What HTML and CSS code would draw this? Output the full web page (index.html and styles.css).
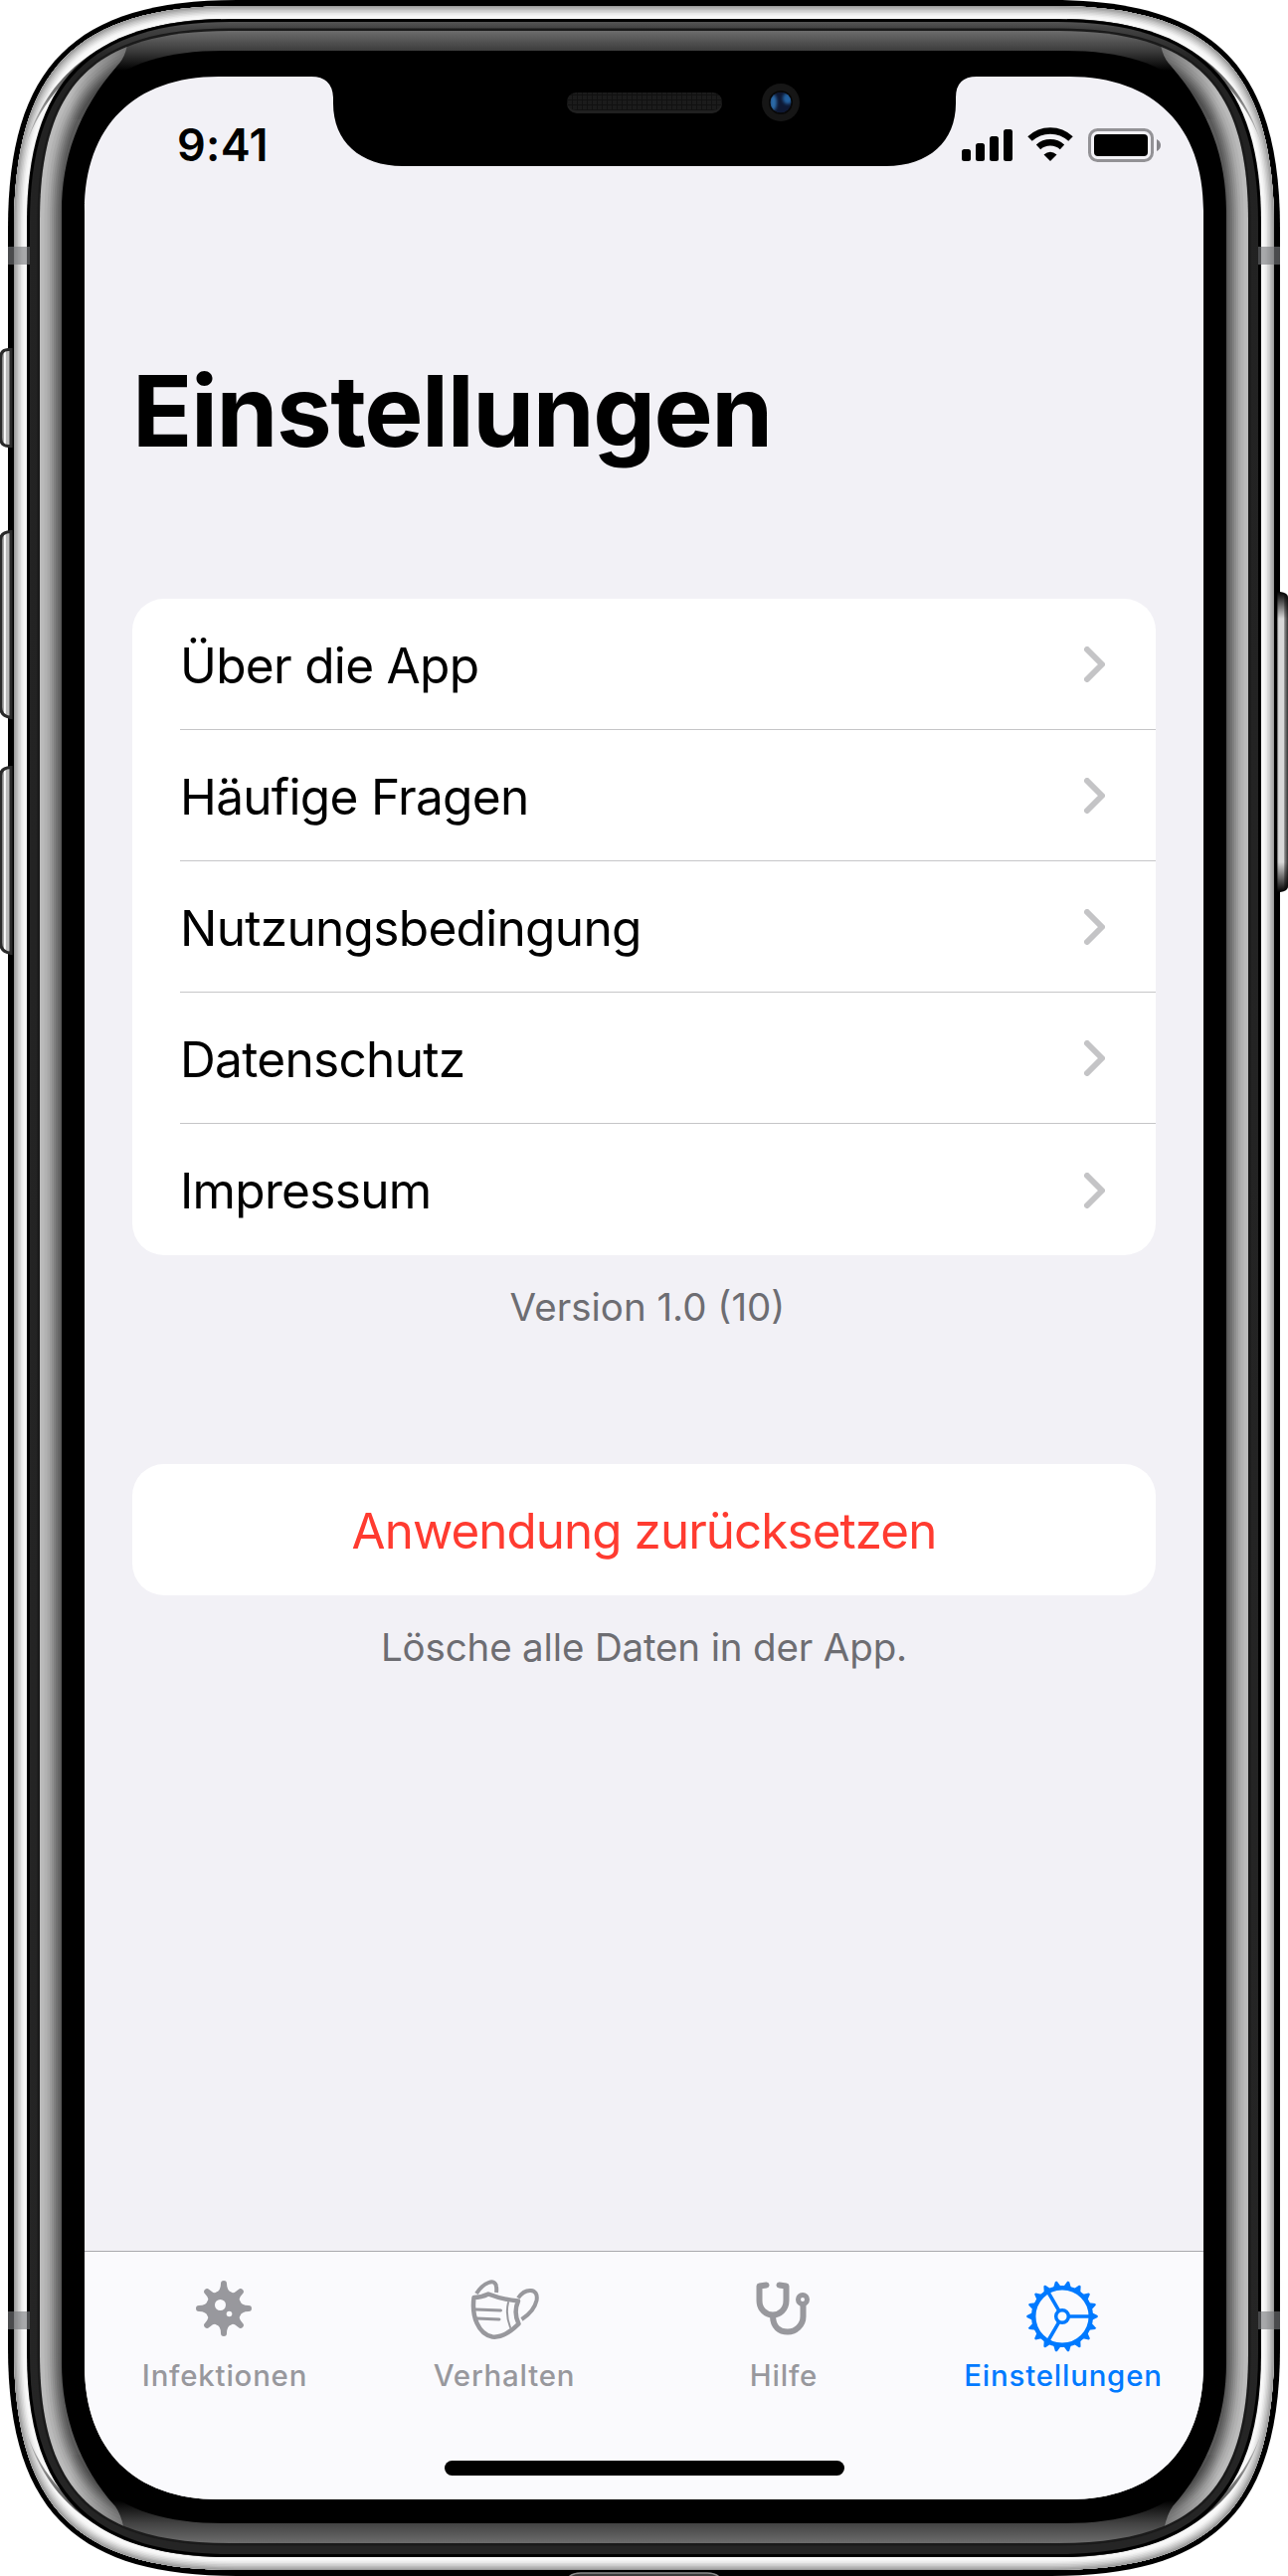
FILE: index.html
```html
<!DOCTYPE html>
<html lang="de">
<head>
<meta charset="utf-8">
<title>Einstellungen</title>
<link rel="stylesheet" href="styles.css">
</head>
<body>
<div class="device">
  <svg class="frame" viewBox="0 0 1295 2590" aria-hidden="true">
    <defs>
      <path id="silver" d="M14 230C14 70 76 6 236 6H1059C1219 6 1281 70 1281 230V2360C1281 2520 1219 2584 1059 2584H236C76 2584 14 2520 14 2360Z"/>
      <path id="glass" d="M40 222C40 85 94 31 231 31H1064C1201 31 1255 85 1255 222V2366C1255 2503 1201 2557 1064 2557H231C94 2557 40 2503 40 2366Z"/>
      <clipPath id="silverClip"><use href="#silver"/></clipPath>
      <clipPath id="sideClip">
        <path d="M38 20H128Q132 52 118 66C78 112 62 160 62 213V2375C62 2430 80 2480 116 2520Q126 2534 128 2570H38Z"/>
        <path d="M1257 20H1167Q1163 52 1177 66C1217 112 1233 160 1233 213V2375C1233 2430 1215 2480 1179 2520Q1169 2534 1167 2570H1257Z"/>
      </clipPath>
      <clipPath id="glassClip"><use href="#glass" clip-path="url(#sideClip)"/></clipPath>
      <clipPath id="lensClip"><circle cx="785" cy="103" r="10.500"/></clipPath>
      <filter id="soft" x="-50%" y="-50%" width="200%" height="200%"><feGaussianBlur stdDeviation="1.600"/></filter>
      <linearGradient id="rim" gradientUnits="userSpaceOnUse" x1="0" y1="22" x2="0" y2="2568">
        <stop offset="0" stop-color="#545454"/><stop offset=".0024" stop-color="#424242"/><stop offset=".015" stop-color="#222"/><stop offset="1" stop-color="#252525"/>
      </linearGradient>
      <linearGradient id="bezel" gradientUnits="userSpaceOnUse" x1="0" y1="31" x2="0" y2="2557">
        <stop offset="0" stop-color="#6c6c6c"/><stop offset=".008" stop-color="#3c3c3c"/><stop offset=".0158" stop-color="#000"/>
        <stop offset=".983" stop-color="#000"/><stop offset=".992" stop-color="#424242"/><stop offset="1" stop-color="#6c6c6c"/>
      </linearGradient>
      <linearGradient id="streak" gradientUnits="userSpaceOnUse" x1="170" y1="24" x2="28" y2="140">
        <stop offset="0" stop-color="#222"/><stop offset=".45" stop-color="#484848"/><stop offset=".75" stop-color="#777"/><stop offset="1" stop-color="#bbb"/>
      </linearGradient>
      <linearGradient id="fade" gradientUnits="userSpaceOnUse" x1="70" y1="0" x2="130" y2="0"><stop offset="0" stop-opacity="0"/><stop offset="1" stop-opacity=".4"/></linearGradient>
      <path id="shade" d="M222 19C160 20 116 36 84 60C60 78 40 103 27 143C38 114 52 95 68 79C100 42 150 20 222 20Z" fill="url(#streak)"/>
      <path id="dim" d="M60 31H131V75L90 120H60Z" fill="url(#fade)"/>
      <linearGradient id="keyL"><stop offset="0" stop-color="#444"/><stop offset=".3" stop-color="#aaa"/><stop offset=".32" stop-color="#fff"/><stop offset=".5" stop-color="#eee"/><stop offset=".55" stop-color="#bbb"/><stop offset=".85" stop-color="#bbb"/><stop offset="1" stop-color="#444"/></linearGradient>
      <linearGradient id="keyR"><stop offset="0" stop-color="#555"/><stop offset=".15" stop-color="#d8d8d8"/><stop offset=".6" stop-color="#d8d8d8"/><stop offset=".7" stop-color="#888"/><stop offset="1" stop-color="#333"/></linearGradient>
      <linearGradient id="keyEnds" x1="0" y1="0" x2="0" y2="1"><stop offset="0" stop-color="#000"/><stop offset=".09" stop-color="#000" stop-opacity="0"/><stop offset=".9" stop-color="#000" stop-opacity="0"/><stop offset="1" stop-color="#000"/></linearGradient>
      <pattern id="mesh" width="5" height="5" patternUnits="userSpaceOnUse"><path d="M0 0H5V5H0Z" fill="#1b1b1b"/><path d="M0 .5H5M.5 0V5" stroke="#111"/></pattern>
    </defs>
    <path d="M8 230C8 67 75 0 238 0H1057C1220 0 1287 67 1287 230V2360C1287 2523 1220 2590 1057 2590H238C75 2590 8 2523 8 2360Z"/>
    <g clip-path="url(#silverClip)" fill="none">
      <use href="#silver" fill="#f8f8f8"/>
      <use href="#silver" stroke="#f3f3f3" stroke-width="20"/>
      <use href="#silver" stroke="#e8e8e8" stroke-width="17"/>
      <use href="#silver" stroke="#dadada" stroke-width="14"/>
      <use href="#silver" stroke="#cbcbcb" stroke-width="11"/>
      <use href="#silver" stroke="#bcbcbc" stroke-width="8"/>
      <use href="#silver" stroke="#aaa" stroke-width="5"/>
      <use href="#silver" stroke="#999" stroke-width="2"/>
    </g>
    <use href="#shade"/>
    <use href="#shade" transform="matrix(-1 0 0 1 1295 0)"/>
    <use href="#shade" transform="matrix(1 0 0 -1 0 2590)"/>
    <use href="#shade" transform="matrix(-1 0 0 -1 1295 2590)"/>
    <path d="M27 224C27 84 87 19 232 19H1063C1208 19 1268 84 1268 224V2366C1268 2506 1208 2571 1063 2571H232C87 2571 27 2506 27 2366Z"/>
    <path fill="url(#rim)" d="M30 224C30 86 90 22 232 22H1063C1205 22 1265 86 1265 224V2366C1265 2504 1205 2568 1063 2568H232C90 2568 30 2504 30 2366Z"/>
    <use href="#glass" fill="url(#bezel)" stroke="#1a1a1a" stroke-width="5"/>
    <use href="#glass" fill="url(#bezel)"/>
    <path d="M62 213C62 102 109 51 225 51H1070C1186 51 1233 102 1233 213V2375C1233 2486 1186 2537 1070 2537H225C109 2537 62 2486 62 2375Z"/>
    <g clip-path="url(#glassClip)" fill="none">
      <use href="#glass" stroke="#5a5a5a" stroke-width="60"/>
      <use href="#glass" stroke="#666" stroke-width="40"/>
      <use href="#glass" stroke="#727272" stroke-width="36"/>
      <use href="#glass" stroke="#808080" stroke-width="32"/>
      <use href="#glass" stroke="#8e8e8e" stroke-width="28"/>
      <use href="#glass" stroke="#9b9b9b" stroke-width="24"/>
      <use href="#glass" stroke="#a8a8a8" stroke-width="20"/>
      <use href="#glass" stroke="#b2b2b2" stroke-width="15"/>
      <use href="#glass" stroke="#bababa" stroke-width="9"/>
      <use href="#dim"/>
      <use href="#dim" transform="matrix(-1 0 0 1 1295 0)"/>
      <use href="#dim" transform="matrix(1 0 0 -1 0 2588)"/>
      <use href="#dim" transform="matrix(-1 0 0 -1 1295 2588)"/>
    </g>
    <g fill="#78797c" fill-opacity=".62">
      <path d="M8 248h22v18H8zM1265 248h22v18h-22zM8 2324h22v18H8zM1265 2324h22v18h-22z"/>
    </g>
    <g fill="url(#keyL)" stroke="#2a2a2a" stroke-width="3">
      <path d="M11 351.500H8Q.5 352 .5 360V440Q.5 448 8 448.500H11Z"/>
      <path d="M11 534.500Q.5 535 .5 543V711Q.5 720 11 721.500Z"/>
      <path d="M11 771.500Q.5 772 .5 780V948Q.5 957 11 958.500Z"/>
    </g>
    <path fill="url(#keyR)" d="M1284 595h3q8 1 8 6v290q0 5-8 6h-3z"/>
    <path fill="url(#keyEnds)" d="M1284 595h3q8 1 8 6v290q0 5-8 6h-3z"/>
    <path fill="#3a3a3a" stroke="#8a8a8a" stroke-width="1.500" d="M571 2592Q575 2587 584 2587H711Q720 2587 724 2592Z"/>
    <path fill="#f2f1f6" d="M85 212C85 127 135 77 220 77H313Q334 77 335 98V104C335 142 362 167 405 167H891C934 167 961 142 961 104V98Q961 77 982 77H1075C1160 77 1210 127 1210 212V2378C1210 2463 1160 2513 1075 2513H220C135 2513 85 2463 85 2378Z"/>
    <rect x="570" y="94" width="156" height="20" rx="10" fill="#202020"/>
    <rect x="570" y="93" width="156" height="18" rx="9" fill="url(#mesh)"/>
    <circle cx="785" cy="103" r="19" fill="#161616"/>
    <circle cx="785" cy="103" r="12" fill="#080808"/>
    <g clip-path="url(#lensClip)">
      <circle cx="785" cy="103" r="10.500" fill="#0e1833"/>
      <g filter="url(#soft)"><ellipse cx="777.500" cy="103" rx="3.500" ry="8" fill="#2c6aa8"/><ellipse cx="792" cy="99" rx="5" ry="5.500" fill="#22609f"/></g>
    </g>
  </svg>

  <main class="screen">
    <header class="status">
      <time class="clock">9:41</time>
      <svg class="status-icons" width="202" height="36" viewBox="0 0 202 36" aria-label="Status">
        <rect x="0" y="22" width="9" height="12" rx="2.500"/><rect x="14" y="16" width="9" height="18" rx="2.500"/><rect x="28" y="9" width="9" height="25" rx="2.500"/><rect x="42" y="2" width="9" height="32" rx="2.500"/>
        <g fill="none" stroke="#000" stroke-width="6.500"><path d="M68.500 11.500A30 30 0 0 1 109.500 11.500"/><path d="M77 19.800A18 18 0 0 1 101 19.800"/></g>
        <path d="M82.500 27.500Q89 22 95.500 27.500L89 34Z"/>
        <rect x="128.500" y="2.500" width="63" height="31" rx="8" fill="none" stroke="#939296" stroke-width="3"/>
        <rect x="133" y="7" width="54" height="22" rx="4"/>
        <path d="M196 12q4 2 4 6t-4 6z" fill="#858489"/>
      </svg>
    </header>
    <h1 class="title">Einstellungen</h1>
    <ul class="card">
      <li class="row"><span class="label">Über die App</span><svg class="chevron" viewBox="0 0 21 36"><path d="M3 3 18 18 3 33"/></svg></li>
      <li class="row"><span class="label">Häufige Fragen</span><svg class="chevron" viewBox="0 0 21 36"><path d="M3 3 18 18 3 33"/></svg></li>
      <li class="row"><span class="label">Nutzungsbedingung</span><svg class="chevron" viewBox="0 0 21 36"><path d="M3 3 18 18 3 33"/></svg></li>
      <li class="row"><span class="label">Datenschutz</span><svg class="chevron" viewBox="0 0 21 36"><path d="M3 3 18 18 3 33"/></svg></li>
      <li class="row"><span class="label">Impressum</span><svg class="chevron" viewBox="0 0 21 36"><path d="M3 3 18 18 3 33"/></svg></li>
    </ul>
    <p class="note version">Version 1.0 (10)</p>
    <button class="card reset">Anwendung zurücksetzen</button>
    <p class="note erase">Lösche alle Daten in der App.</p>

    <nav class="tabs">
      <a class="tab">
        <svg class="icon" viewBox="1 0 72 72">
          <circle cx="36" cy="28" r="18" fill="currentColor"/>
          <g fill="currentColor">
            <path id="spike" d="M27.500 12.500Q33 10.500 33 3a3 3 0 0 1 6 0Q39 10.500 44.500 12.500Z"/>
            <use href="#spike" transform="rotate(45 36 28) translate(0 1.200)"/><use href="#spike" transform="rotate(90 36 28)"/><use href="#spike" transform="rotate(135 36 28) translate(0 1.200)"/><use href="#spike" transform="rotate(180 36 28)"/><use href="#spike" transform="rotate(225 36 28) translate(0 1.200)"/><use href="#spike" transform="rotate(270 36 28)"/><use href="#spike" transform="rotate(315 36 28) translate(0 1.200)"/>
          </g>
          <circle cx="32.500" cy="24.500" r="5.500" fill="#fafafd"/><circle cx="41.500" cy="33.500" r="2.800" fill="#fafafd"/>
        </svg>
        <span>Infektionen</span>
      </a>
      <a class="tab">
        <svg class="icon" viewBox="-1 0 72 72" fill="none" stroke="currentColor" stroke-linecap="round" stroke-linejoin="round">
          <path stroke-width="4.500" d="M4.500 17Q12 17 19 13.500Q33 19 49 20.500Q44 32 49.500 43.500Q35 58 23 56.500C9 54 2 36 4.500 17Z"/>
          <path stroke-width="3" d="M6 29 31.500 30M7 38 30 39"/>
          <path stroke-width="2" d="M39 22Q36 34 41 47"/>
          <path stroke-width="4" stroke-linecap="butt" d="M7 13C14 2 26-3 27 6Q27.500 9 27 12M49 17.500C56 7 70 7 67.500 20Q65 31 52.500 39"/>
        </svg>
        <span>Verhalten</span>
      </a>
      <a class="tab">
        <svg class="icon" viewBox="0 0 72 72" fill="none" stroke="currentColor" stroke-width="6" stroke-linecap="round" stroke-linejoin="round">
          <path d="M18.500 4.500 11.500 5.500V20C11.500 29 18 34.500 25 34.500S38.500 29 38.500 20V5.500L31.500 4.500"/>
          <path stroke-linecap="butt" d="M25 35C25 47 32 51.500 40 51.500S55.500 45 55.500 36V24"/>
          <circle cx="55" cy="19" r="4.500" stroke-width="5"/>
        </svg>
        <span>Hilfe</span>
      </a>
      <a class="tab active">
        <svg class="icon" viewBox="1 0 72 72" fill="none" stroke="currentColor">
          <circle cx="36" cy="36" r="28.800" stroke-width="4.500"/>
          <circle cx="36" cy="36" r="6.300" stroke-width="3.500"/>
          <path stroke-width="3.500" d="M43 36H66M32.500 29.900 21.500 11M32.500 42.100 21.500 61"/>
          <g fill="currentColor" stroke="none">
            <g id="teeth"><path id="tooth" d="M65.500 32 71.500 35Q72.300 36 71.500 37L65.500 40Z"/><use href="#tooth" transform="rotate(20 36 36)"/><use href="#tooth" transform="rotate(40 36 36)"/></g>
            <use href="#teeth" transform="rotate(60 36 36)"/><use href="#teeth" transform="rotate(120 36 36)"/><use href="#teeth" transform="rotate(180 36 36)"/><use href="#teeth" transform="rotate(240 36 36)"/><use href="#teeth" transform="rotate(300 36 36)"/>
          </g>
        </svg>
        <span>Einstellungen</span>
      </a>
      <span class="home"></span>
    </nav>
  </main>
</div>
</body>
</html>
```
FILE: styles.css
```css
* { box-sizing: border-box; }
body { margin: 0; background: #fff; font-family: Inter, "Liberation Sans", sans-serif; color: #000; }
.device { position: relative; width: 1295px; height: 2590px; padding: 77px 85px; overflow: hidden; }
.frame { position: absolute; inset: 0; width: 1295px; height: 2590px; }
.screen { position: relative; display: flex; flex-direction: column; width: 1125px; height: 2436px; padding: 0 48px; clip-path: path("M0 135C0 50 50 0 135 0H990C1075 0 1125 50 1125 135V2301C1125 2386 1075 2436 990 2436H135C50 2436 0 2386 0 2301Z"); }
.status { display: flex; justify-content: space-between; height: 132px; padding: 51px 41px 0 93px; margin: 0 -48px 136px; }
.clock { font-size: 45px; line-height: 36px; font-weight: 600; letter-spacing: 0.3px; }
.title { margin: 0 0 121px; font-size: 99.5px; line-height: 136px; font-weight: 700; letter-spacing: -1.45px; white-space: nowrap; }
.card { margin: 0; padding: 0; border: 0; border-radius: 32px; background: #fff; list-style: none; overflow: hidden; flex: none; }
.row { display: flex; align-items: center; justify-content: space-between; height: 132px; margin-left: 48px; padding: 1px 51px 0 0; border-bottom: 1px solid #c6c6c8; }
.row:last-child { border-bottom: 0; }
.label { padding-top: 1px; font-size: 49.6px; line-height: 66px; letter-spacing: -0.72px; white-space: nowrap; }
.chevron { width: 21px; height: 36px; fill: none; stroke: #c4c4c6; stroke-width: 6; stroke-linecap: round; stroke-linejoin: round; }
.note { margin: 0; height: 48px; font-size: 38.5px; line-height: 48px; color: #6d6d72; text-align: center; white-space: nowrap; letter-spacing: -0.15px; }
.version { margin-top: 28px; margin-bottom: 134px; padding-left: 7px; letter-spacing: 0; }
.reset { height: 132px; padding-top: 2px; font: 400 49.3px/64px Inter, "Liberation Sans", sans-serif; letter-spacing: -0.9px; color: #ff3b30; }
.erase { margin-top: 28px; }
.tabs { display: grid; grid-template-columns: repeat(4, 281px); grid-template-rows: 181px 15px; justify-content: center; height: 250px; margin: auto -48px 0; padding-top: 29px; border-top: 1px solid #a9a9ad; color: #98989d; background: #fafafd; }
.tab { display: flex; flex-direction: column; align-items: center; font-size: 29.4px; line-height: 36px; font-weight: 500; letter-spacing: 0.8px; }
.tab.active { color: #007aff; }
.icon { width: 72px; height: 72px; margin-bottom: 6px; overflow: visible; }
.home { grid-column: 1 / -1; justify-self: center; width: 402px; height: 15px; border-radius: 7.5px; background: #000; }
```
